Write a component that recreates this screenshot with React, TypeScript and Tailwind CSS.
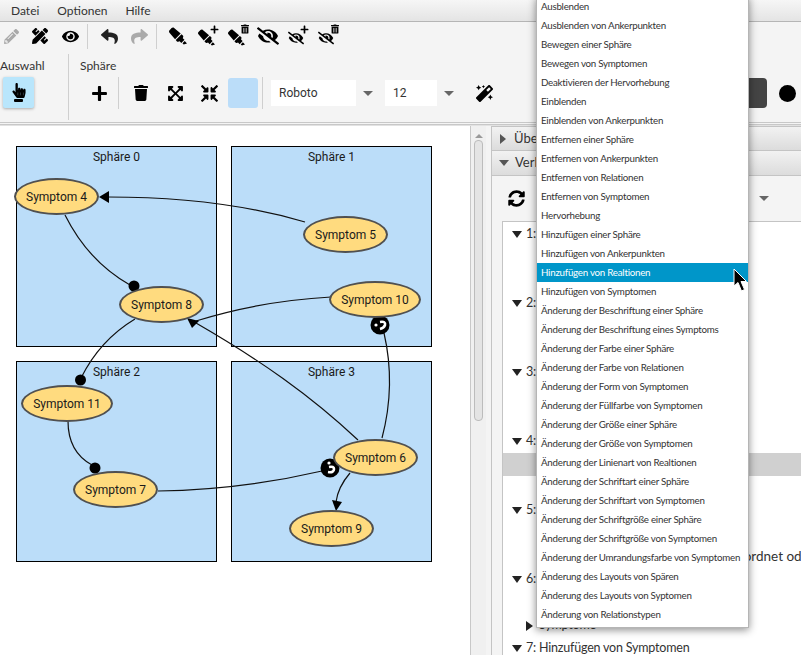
import React from "react";
import { FaPencilAlt, FaPencilRuler, FaEye, FaEyeSlash, FaHighlighter, FaPlus, FaTrash, FaTrashAlt, FaExpandArrowsAlt, FaCompressArrowsAlt, FaHandPointer, FaMagic, FaSyncAlt, FaReply, FaShare } from "react-icons/fa";

const menuItems = [
  "Ausblenden",
  "Ausblenden von Ankerpunkten",
  "Bewegen einer Sphäre",
  "Bewegen von Symptomen",
  "Deaktivieren der Hervorhebung",
  "Einblenden",
  "Einblenden von Ankerpunkten",
  "Entfernen einer Sphäre",
  "Entfernen von Ankerpunkten",
  "Entfernen von Relationen",
  "Entfernen von Symptomen",
  "Hervorhebung",
  "Hinzufügen einer Sphäre",
  "Hinzufügen von Ankerpunkten",
  "Hinzufügen von Realtionen",
  "Hinzufügen von Symptomen",
  "Änderung der Beschriftung einer Sphäre",
  "Änderung der Beschriftung eines Symptoms",
  "Änderung der Farbe einer Sphäre",
  "Änderung der Farbe von Relationen",
  "Änderung der Form von Symptomen",
  "Änderung der Füllfarbe von Symptomen",
  "Änderung der Größe einer Sphäre",
  "Änderung der Größe von Symptomen",
  "Änderung der Linienart von Realtionen",
  "Änderung der Schriftart einer Sphäre",
  "Änderung der Schriftart von Symptomen",
  "Änderung der Schriftgröße einer Sphäre",
  "Änderung der Schriftgröße von Symptomen",
  "Änderung der Umrandungsfarbe von Symptomen",
  "Änderung des Layouts von Spären",
  "Änderung des Layouts von Syptomen",
  "Änderung von Relationstypen",
];

const nodes = [
  { label: "Symptom 4", pos: "left-[14px] top-[52px] w-[85px]" },
  { label: "Symptom 8", pos: "left-[119px] top-[160px] w-[85px]" },
  { label: "Symptom 5", pos: "left-[303px] top-[90px] w-[85px]" },
  { label: "Symptom 10", pos: "left-[329px] top-[155px] w-[92px]" },
  { label: "Symptom 11", pos: "left-[21px] top-[259px] w-[92px]" },
  { label: "Symptom 7", pos: "left-[73px] top-[345px] w-[85px]" },
  { label: "Symptom 6", pos: "left-[333px] top-[313px] w-[85px]" },
  { label: "Symptom 9", pos: "left-[289px] top-[384px] w-[85px]" },
];

const Sep = ({ className }: { className: string }) => <div className={`w-px bg-[#cfcfcf] ${className}`} />;

// highlighter / eye-slash icons with the small plus or trash next to them
const Badged = ({ kind, badge }: { kind: "pen" | "eye"; badge?: "plus" | "trash" }) => {
  const small = !!badge;
  return (
    <div className="relative w-[22px] h-[22px] shrink-0 flex items-center justify-center text-black">
      {kind === "pen" ? (
        <FaHighlighter className={small ? "w-[17px] h-[17px] -scale-x-100 mt-[3px] -ml-[4px]" : "w-[18px] h-[18px] -scale-x-100"} />
      ) : (
        <FaEyeSlash className={small ? "w-[16px] h-[16px] mt-[3px] -ml-[4px]" : "w-[22px] h-[22px]"} />
      )}
      {badge === "plus" && <FaPlus className="absolute right-[0px] top-[0px] w-[9px] h-[9px]" />}
      {badge === "trash" && <FaTrashAlt className="absolute right-[0px] top-[-1px] w-[8px] h-[10px]" />}
    </div>
  );
};

const Arrow = ({ className }: { className: string }) => (
  <div className={`w-0 h-0 border-l-[5px] border-r-[5px] border-t-[5px] border-l-transparent border-r-transparent border-t-[#666] ${className}`} />
);

const TreeDown = ({ className = "" }: { className?: string }) => (
  <div className={`w-0 h-0 border-l-[5px] border-r-[5px] border-t-[7px] border-l-transparent border-r-transparent border-t-[#222] ${className}`} />
);

const Graph = () => (
  <div className="relative w-[470px] h-full bg-white overflow-hidden shrink-0" style={{ fontFamily: "Roboto, sans-serif" }}>
    <div className="grid grid-cols-[201px_201px] grid-rows-[201px_201px] gap-[14px] ml-[16px] mt-[20px] text-[12px] text-[#1a1a1a]">
      {["Sphäre 0", "Sphäre 1", "Sphäre 2", "Sphäre 3"].map(name => (
        <div key={name} className="bg-[#bbddf9] border border-black text-center pt-[3px] leading-[14px]">
          {name}
        </div>
      ))}
    </div>
    <svg className="absolute left-0 top-0" width="470" height="529" viewBox="0 126 470 529" fill="none">
      <g stroke="#111" strokeWidth="1.2">
        <path d="M305 222 Q220 197 108 197" />
        <path d="M65 215 C80 245 100 268 130 285" />
        <path d="M135 319 Q100 340 81 378" />
        <path d="M68 421 Q68 452 92 465" />
        <path d="M331 297 Q260 301 196 321" />
        <path d="M358 440 C310 395 260 360 196 323" />
        <path d="M382 438 Q396 385 384 333" />
        <path d="M158 491 Q240 490 322 471" />
        <path d="M350 473 Q338 487 336 502" />
      </g>
      <polygon points="99,197 109,191 109,203" fill="#000" />
      <polygon points="187,318 199,321 192,328" fill="#000" />
      <polygon points="336,511 332,500 342,502" fill="#000" />
      <circle cx="134" cy="286" r="5.5" fill="#000" />
      <circle cx="80.500" cy="380" r="5.5" fill="#000" />
      <circle cx="95" cy="468" r="5.5" fill="#000" />
      <circle cx="380" cy="325" r="9.5" fill="#000" />
      <path d="M380 322 Q386 321 385 325 Q384 328 380 329" stroke="#fff" strokeWidth="2.6" />
      <circle cx="376" cy="325" r="1.6" fill="#fff" />
      <circle cx="330" cy="468" r="9.5" fill="#000" />
      <path d="M329 467 Q334 466 334 469 Q334 473 328 472" stroke="#fff" strokeWidth="2.6" />
      <circle cx="329" cy="463" r="1.6" fill="#fff" />
    </svg>
    {nodes.map(n => (
      <div key={n.label} className={`absolute h-[37px] rounded-[50%] border-2 border-[#505050] bg-[#ffdb7f] flex items-center justify-center text-[12px] text-[#1a1a1a] ${n.pos}`}>
        {n.label}
      </div>
    ))}
  </div>
);

const treeRows: { text?: React.ReactNode; cls?: string }[] = [
  { text: <><TreeDown className="absolute left-[9px] top-[8px]" /><span className="ml-[23px]">1:</span></> },
  {}, {},
  { text: <><TreeDown className="absolute left-[9px] top-[8px]" /><span className="ml-[23px]">2:</span></> },
  {}, {},
  { text: <><TreeDown className="absolute left-[9px] top-[8px]" /><span className="ml-[23px]">3:</span></> },
  {}, {},
  { text: <><TreeDown className="absolute left-[9px] top-[8px]" /><span className="ml-[23px]">4:</span></> },
  { cls: "bg-[#d0d0d0]" },
  {},
  { text: <><TreeDown className="absolute left-[9px] top-[8px]" /><span className="ml-[23px]">5:</span></> },
  {},
  { text: <span className="ml-[213px] whitespace-nowrap text-[13.5px] tracking-normal">zugeordnet oder</span> },
  { text: <><TreeDown className="absolute left-[9px] top-[8px]" /><span className="ml-[23px]">6:</span></> },
  {},
  { text: <><div className="absolute left-[23px] top-[7px] w-0 h-0 border-t-[5px] border-b-[5px] border-l-[7px] border-t-transparent border-b-transparent border-l-[#222]" /><span className="ml-[36px]">Symptome</span></> },
  { text: <><TreeDown className="absolute left-[9px] top-[8px]" /><span className="ml-[23px]">7: Hinzufügen von Symptomen</span></> },
];

const SidePanel = () => (
  <div className="flex flex-1 min-w-0 h-full bg-[#f4f4f4]">
    <div className="w-[16px] shrink-0 bg-[#f0f0f0] border-l border-[#c8c8c8] flex flex-col items-center">
      <div className="w-0 h-0 mt-[8px] border-l-[4px] border-r-[4px] border-b-[4px] border-l-transparent border-r-transparent border-b-[#999]" />
      <div className="w-[9px] h-[281px] mt-[2px] bg-[#e4e4e4] border border-[#bcbcbc] rounded-[4px]" />
    </div>
    <div className="ml-[5px] flex-1 min-w-0 flex flex-col border-l border-[#c4c4c4]">
      <div className="h-[25px] shrink-0 bg-gradient-to-b from-[#f2f2f2] to-[#dcdcdc] border-y border-[#c4c4c4] flex items-center pl-[8px] text-[13px] text-[#333]">
        <div className="w-0 h-0 border-t-[5px] border-b-[5px] border-l-[6px] border-t-transparent border-b-transparent border-l-[#555] mr-[8px]" />
        Über
      </div>
      <div className="h-[25px] shrink-0 bg-gradient-to-b from-[#f2f2f2] to-[#dcdcdc] border-b border-[#c4c4c4] flex items-center pl-[7px] text-[13px] text-[#333]">
        <div className="w-0 h-0 border-l-[5px] border-r-[5px] border-t-[6px] border-l-transparent border-r-transparent border-t-[#555] mr-[6px]" />
        Verlauf
      </div>
      <div className="h-[45px] shrink-0 flex items-center pl-[16px] relative">
        <FaSyncAlt className="w-[17px] h-[17px] text-black" />
        <Arrow className="absolute left-[267px] top-[20px]" />
      </div>
      <div className="ml-[10px] flex-1 min-h-0 pt-[1px] bg-white border-l border-t border-[#c4c4c4] text-[12.5px] tracking-[-0.2px] text-[#333] overflow-hidden">
        {treeRows.map((r, i) => (
          <div key={i} className={`relative h-[23px] flex items-center ${r.cls ?? ""}`}>
            {r.text}
          </div>
        ))}
      </div>
    </div>
  </div>
);

export default function App() {
  return (
    <div className="relative w-[801px] h-[655px] overflow-hidden bg-[#f4f4f4] flex flex-col" style={{ fontFamily: 'Lato, sans-serif' }}>
      <div className="h-[22px] shrink-0 bg-gradient-to-b from-[#f6f6f6] to-[#e4e4e4] border-b border-[#b5b5b5] flex items-center text-[12px] text-[#333] pl-[11px] gap-[18px]">
        <span>Datei</span>
        <span>Optionen</span>
        <span>Hilfe</span>
      </div>

      <div className="h-[30px] shrink-0 flex items-center pb-[2px]">
        <div className="w-[22px] flex justify-center"><FaPencilAlt className="w-[15px] h-[15px] text-[#aaa]" /></div>
        <div className="w-[22px] ml-[7px] flex justify-center"><FaPencilRuler className="w-[16px] h-[16px] text-black" /></div>
        <div className="w-[22px] ml-[8px] flex justify-center"><FaEye className="w-[17px] h-[17px] text-black" /></div>
        <Sep className="h-[25px] ml-[6px]" />
        <div className="w-[22px] ml-[10px] flex justify-center"><FaReply className="w-[17px] h-[17px] text-[#222]" /></div>
        <div className="w-[22px] ml-[8px] flex justify-center"><FaShare className="w-[17px] h-[17px] text-[#aaa]" /></div>
        <Sep className="h-[25px] ml-[6px]" />
        <div className="ml-[10px] flex gap-[8px]">
          <Badged kind="pen" />
          <Badged kind="pen" badge="plus" />
          <Badged kind="pen" badge="trash" />
          <Badged kind="eye" />
          <Badged kind="eye" badge="plus" />
          <Badged kind="eye" badge="trash" />
        </div>
      </div>

      <div className="h-[70px] shrink-0 flex text-[12px] text-[#333]">
        <div className="w-[68px] shrink-0 flex flex-col">
          <span className="mt-[6px] leading-[16px]">Auswahl</span>
          <div className="w-[31px] h-[31px] ml-[3px] mt-[3px] bg-[#b9e6fc] rounded-[2px] shadow-[0_1px_3px_rgba(0,0,0,0.3)] flex flex-col items-center justify-center">
            <FaHandPointer className="w-[14px] h-[15px] text-black" />
            <div className="w-[9px] h-[3px] mt-[1px] bg-black rounded-[1px]" />
          </div>
        </div>
        <Sep className="h-[66px] mt-[2px]" />
        <div className="flex-1 flex flex-col pl-[11px]">
          <span className="mt-[6px] leading-[16px]">Sphäre</span>
          <div className="flex items-center h-[32px] mt-[3px]">
            <div className="w-[18px] ml-[10px] flex justify-center"><FaPlus className="w-[17px] h-[17px] text-black" /></div>
            <Sep className="h-[32px] ml-[10px]" />
            <div className="w-[18px] ml-[13px] flex justify-center"><FaTrash className="w-[14px] h-[16px] text-black" /></div>
            <div className="w-[18px] ml-[16px] flex justify-center"><FaExpandArrowsAlt className="w-[17px] h-[17px] text-black" /></div>
            <div className="w-[18px] ml-[16px] flex justify-center"><FaCompressArrowsAlt className="w-[17px] h-[17px] text-black" /></div>
            <div className="w-[30px] h-[30px] ml-[10px] bg-[#bbddf9] rounded-[3px]" />
            <Sep className="h-[32px] ml-[4px]" />
            <div className="w-[85px] h-[26px] ml-[8px] bg-white flex items-center pl-[8px] text-[12px] text-[#333]" style={{ fontFamily: "Roboto, sans-serif" }}>Roboto</div>
            <Arrow className="ml-[7px]" />
            <div className="w-[52px] h-[26px] ml-[12px] bg-white flex items-center pl-[8px] text-[12px] text-[#333]" style={{ fontFamily: "Roboto, sans-serif" }}>12</div>
            <Arrow className="ml-[7px]" />
            <FaMagic className="w-[17px] h-[17px] ml-[22px] text-black" />
            <div className="w-[19px] h-[30px] ml-[255px] bg-[#444] rounded-r-[4px]" />
            <div className="w-[17px] h-[17px] ml-[12px] bg-black rounded-full" />
          </div>
        </div>
      </div>

      <div className="h-[3px] shrink-0 border-y border-[#c8c8c8] bg-[#f4f4f4]" />
      <div className="flex-1 min-h-0 flex border-t border-[#e2e2e2]">
        <Graph />
        <SidePanel />
      </div>

      <div className="absolute left-[536px] top-[-4px] w-[213px] pb-[3px] bg-white border border-[#b5b5b5] shadow-[0_2px_8px_rgba(0,0,0,0.45)] text-[9.75px] tracking-[-0.25px] text-[#333]">
        {menuItems.map(item => (
          <div key={item} className={`h-[19px] flex items-center pl-[4px] whitespace-nowrap ${item === "Hinzufügen von Realtionen" ? "bg-[#0096c9] text-white" : ""}`}>
            {item}
          </div>
        ))}
      </div>

      <svg className="absolute left-[733px] top-[268px]" width="16" height="25" viewBox="0 0 16 25">
        <polygon points="1,1 1,18 5,14.500 8.500,23 11.500,21.500 8,13.500 13.500,13.500" fill="#000" stroke="#fff" strokeWidth="1" />
      </svg>
    </div>
  );
}
